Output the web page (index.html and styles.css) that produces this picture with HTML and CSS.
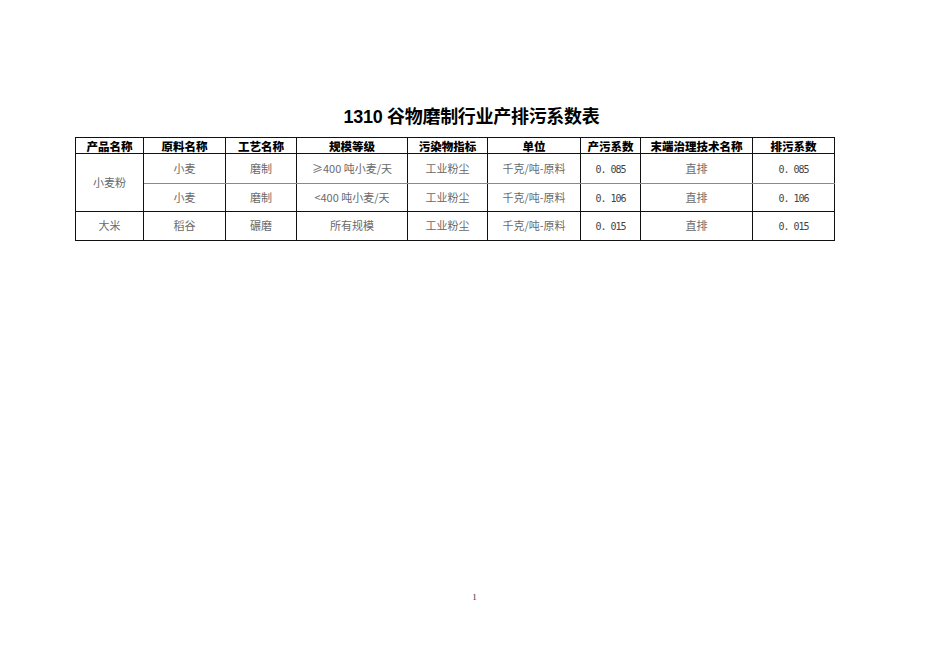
FILE: index.html
```html
<!DOCTYPE html>
<html lang="zh">
<head>
<meta charset="utf-8">
<title>1310 谷物磨制行业产排污系数表</title>
<link rel="stylesheet" href="styles.css">
</head>
<body>
<main class="page">
  <div class="sheet">
    <h1 class="title">1310 谷物磨制行业产排污系数表</h1>
    <table class="coef">
      <colgroup>
        <col class="c1"><col class="c2"><col class="c3"><col class="c4"><col class="c5">
        <col class="c6"><col class="c7"><col class="c8"><col class="c9">
      </colgroup>
      <thead>
        <tr class="head">
          <th>产品名称</th><th>原料名称</th><th>工艺名称</th><th>规模等级</th><th>污染物指标</th>
          <th>单位</th><th>产污系数</th><th>末端治理技术名称</th><th>排污系数</th>
        </tr>
      </thead>
      <tbody>
        <tr class="r1">
          <td rowspan="2" class="group">小麦粉</td>
          <td>小麦</td><td>磨制</td><td>≥400 吨小麦/天</td><td>工业粉尘</td>
          <td>千克/吨-原料</td><td class="num"><span>0.&nbsp;085</span></td><td>直排</td><td class="num"><span>0.&nbsp;085</span></td>
        </tr>
        <tr class="r2">
          <td>小麦</td><td>磨制</td><td>&lt;400 吨小麦/天</td><td>工业粉尘</td>
          <td>千克/吨-原料</td><td class="num"><span>0.&nbsp;106</span></td><td>直排</td><td class="num"><span>0.&nbsp;106</span></td>
        </tr>
        <tr class="r3">
          <td>大米</td><td>稻谷</td><td>碾磨</td><td>所有规模</td><td>工业粉尘</td>
          <td>千克/吨-原料</td><td class="num"><span>0.&nbsp;015</span></td><td>直排</td><td class="num"><span>0.&nbsp;015</span></td>
        </tr>
      </tbody>
    </table>
    <div class="pageno">1</div>
  </div>
</main>
</body>
</html>
```

FILE: styles.css
```css
html, body {
  margin: 0;
  padding: 0;
  background: #ffffff;
}

.page {
  width: 950px;
  height: 672px;
  display: flex;
  justify-content: flex-start;
}

.sheet {
  margin-left: 75px;
  width: 759px;
  padding-top: 106px;
}

.title {
  margin: 0 0 9px 0;
  padding-left: 34px;
  text-align: center;
  font-family: "Liberation Sans", "Noto Sans CJK SC", sans-serif;
  font-weight: bold;
  font-size: 18px;
  line-height: 22px;
  color: #000;
  letter-spacing: -0.3px;
}

.coef {
  border-collapse: collapse;
  table-layout: fixed;
  width: 759px;
  font-family: "Noto Sans CJK SC", sans-serif;
}

.c1 { width: 68px; }
.c2 { width: 82px; }
.c3 { width: 71px; }
.c4 { width: 111px; }
.c5 { width: 80px; }
.c6 { width: 93px; }
.c7 { width: 60px; }
.c8 { width: 112px; }
.c9 { width: 82px; }

.coef th,
.coef td {
  border: 1px solid #111;
  padding: 0;
  text-align: center;
  vertical-align: middle;
  overflow: hidden;
  white-space: nowrap;
}

.coef th {
  font-weight: 900;
  font-size: 11.5px;
  line-height: 14px;
  color: #000;
  height: 15px;
}

.coef td {
  font-size: 11px;
  line-height: 14px;
  color: #6a6a6a;
  padding-bottom: 2px;
}

.r1 td { height: 27px; border-bottom-color: #8a8a8a; }
.r2 td { height: 25px; }
.r3 td { height: 26px; }
.r1 td.group { border-bottom-color: #111; }

.coef td.num span {
  display: inline-block;
  font-family: "DejaVu Sans Mono", "Liberation Mono", monospace;
  font-size: 10px;
  line-height: 14px;
  letter-spacing: -1px;
  color: #444;
  transform: translateY(1px);
}

.pageno {
  margin-top: 351px;
  padding-left: 40px;
  text-align: center;
  font-family: "Liberation Serif", serif;
  font-size: 9px;
  color: #333;
}
```
